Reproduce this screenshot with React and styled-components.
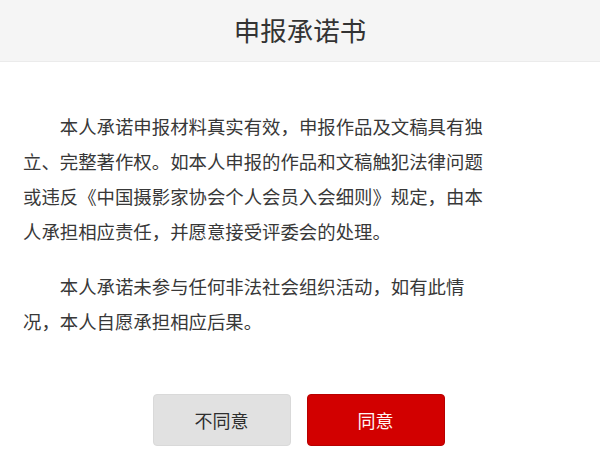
import React from "react";
import styled, { createGlobalStyle } from "styled-components";

const GlobalStyle = createGlobalStyle`
  html, body {
    margin: 0;
    padding: 0;
    background: #ffffff;
  }
  body {
    font-family: "Noto Sans CJK SC", "Noto Sans", "Liberation Sans", sans-serif;
    color: #333333;
  }
`;

const Dialog = styled.div`
  width: 600px;
  height: 465px;
  display: flex;
  flex-direction: column;
  background: #ffffff;
  overflow: hidden;
`;

const Header = styled.header`
  height: 61px;
  flex: none;
  display: flex;
  align-items: center;
  justify-content: center;
  background: #f5f5f5;
  border-bottom: 1px solid #ebebeb;
`;

const Title = styled.h1`
  margin: 0;
  font-size: 26.5px;
  font-weight: 400;
  color: #333333;
  line-height: 1;
`;

const Body = styled.main`
  padding: 47px 0 0 23px;
  display: flex;
  flex-direction: column;
`;

const Paragraph = styled.p`
  margin: 0 0 20px;
  width: calc(25em + 1px);
  font-size: 18.4px;
  line-height: 35px;
  text-indent: 2em;
  color: #383838;
  line-break: strict;
`;

const Actions = styled.div`
  margin-top: 35px;
  padding-right: 3px;
  display: flex;
  justify-content: center;
  gap: 16px;
`;

const Button = styled.button`
  width: 138px;
  height: 52px;
  border-radius: 4px;
  font-family: inherit;
  font-size: 18px;
  cursor: pointer;
  border: 1px solid ${(p) => (p.$primary ? "#b80000" : "#d9d9d9")};
  background: ${(p) => (p.$primary ? "#d20000" : "#e1e1e1")};
  color: ${(p) => (p.$primary ? "#fff4f4" : "#2e2e2e")};
`;

export default function App() {
  return (
    <>
      <GlobalStyle />
      <Dialog>
        <Header>
          <Title>申报承诺书</Title>
        </Header>
        <Body>
          <Paragraph>
            本人承诺申报材料真实有效，申报作品及文稿具有独立、完整著作权。如本人申报的作品和文稿触犯法律问题或违反《中国摄影家协会个人会员入会细则》规定，由本人承担相应责任，并愿意接受评委会的处理。
          </Paragraph>
          <Paragraph>
            本人承诺未参与任何非法社会组织活动，如有此情况，本人自愿承担相应后果。
          </Paragraph>
        </Body>
        <Actions>
          <Button type="button">不同意</Button>
          <Button type="button" $primary>
            同意
          </Button>
        </Actions>
      </Dialog>
    </>
  );
}
